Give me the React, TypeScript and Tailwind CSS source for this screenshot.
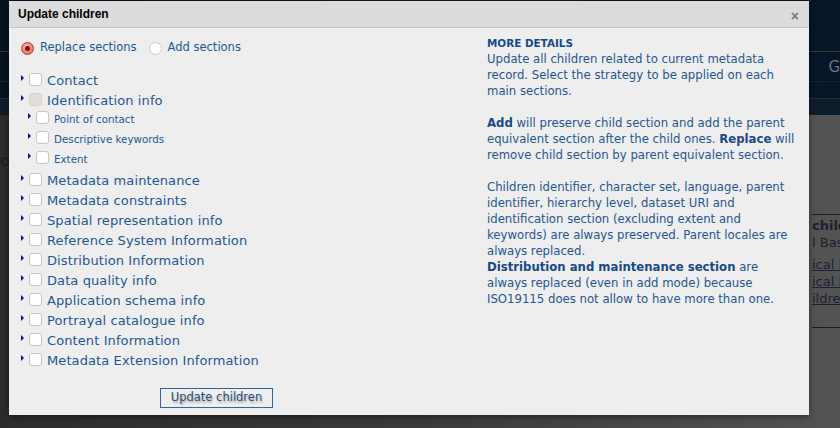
import React from 'react';

const topSections = [
  'Metadata maintenance',
  'Metadata constraints',
  'Spatial representation info',
  'Reference System Information',
  'Distribution Information',
  'Data quality info',
  'Application schema info',
  'Portrayal catalogue info',
  'Content Information',
  'Metadata Extension Information',
];

const identSubs = ['Point of contact', 'Descriptive keywords', 'Extent'];

function Arrow() {
  return (
    <span className="mt-[4px] mr-[5px] h-0 w-0 shrink-0 border-y-[3px] border-l-[3px] border-y-transparent border-l-[#0b0b9c]" />
  );
}

function Box({ disabled }: { disabled?: boolean }) {
  return (
    <span
      className={
        'mt-[2px] h-[13px] w-[13px] shrink-0 rounded-[3px] border ' +
        (disabled ? 'border-[#d6d0c8] bg-[#e2ddd6]' : 'border-[#cdc6bd] bg-white')
      }
    />
  );
}

function Radio({ checked }: { checked?: boolean }) {
  if (checked) {
    return (
      <span className="flex h-[13px] w-[13px] shrink-0 items-center justify-center rounded-full border border-[#c0392f] bg-[radial-gradient(circle_at_40%_35%,#fbb9b0,#e4574b)]">
        <span className="h-[5px] w-[5px] rounded-full bg-[#7c120b]" />
      </span>
    );
  }
  return <span className="block h-[13px] w-[13px] shrink-0 rounded-full border border-[#d5cdc4] bg-white" />;
}

function Row({ label, disabled }: { label: string; disabled?: boolean }) {
  return (
    <div className="flex h-5 items-start">
      <Arrow />
      <Box disabled={disabled} />
      <span className="ml-[5px] text-[13px] leading-5 tracking-[0.1px] text-[#1d5895]">{label}</span>
    </div>
  );
}

export default function App() {
  return (
    <div className="relative h-[428px] w-[840px] overflow-hidden font-['DejaVu_Sans',sans-serif]">
      {/* page behind the overlay */}
      <div className="flex h-full flex-col">
        <div className="flex h-[115px] flex-col bg-gradient-to-r from-[#07121d] via-[#0a1a2b] to-[#061527]">
          <div className="h-[52px] border-b border-[#3b3a30]" />
          <div className="flex h-[30px] justify-end border-b border-[#17222e] pr-0 text-[15px] leading-[30px] text-[#6b737c]">
            G
          </div>
          <div className="h-[17px] border-b border-[#22303d]" />
          <div className="flex-1 bg-[#0f1d2b]" />
        </div>
        <div className="flex flex-1 flex-col bg-gradient-to-r from-[#2c2c2c] via-[#3a3a3a] to-[#545454]">
          <div className="pt-[38px] text-[12px] font-bold text-[#1a1f26]">OR</div>
          <div className="mt-[43px] ml-[812px] whitespace-nowrap border-t border-[#1c1c1c] pt-[2px] text-[13px] leading-[17px] text-[#1a2230]">
            <div className="font-bold">children</div>
            <div>l Basic</div>
            <div className="mt-[5px] underline">ical B</div>
            <div className="underline">ical B</div>
            <div className="underline">ildren</div>
            <div className="mt-[20px] border-t border-[#1c1c1c]" />
          </div>
        </div>
      </div>

      {/* modal */}
      <div className="absolute left-[9px] top-[1px] flex h-[414px] w-[800px] flex-col bg-[#eeeeee] shadow-[0_2px_6px_rgba(0,0,0,0.45)]">
        <div className="flex h-[27px] items-center justify-between border-b border-[#c6c6c6] bg-[#dcdcdc] pl-[9px] pr-[10px]">
          <span className="font-['Liberation_Sans',Arial,sans-serif] text-[12px] font-bold text-black">Update children</span>
          <span className="mt-[4px] font-['Liberation_Sans',Arial,sans-serif] text-[14px] font-bold leading-none text-[#7a7a7a]">×</span>
        </div>

        <div className="flex flex-1 pl-[12px] pt-[10px]">
          {/* left column */}
          <div className="flex w-[466px] flex-col">
            <div className="flex h-5 items-center text-[11.5px] text-[#1d5895]">
              <Radio checked />
              <span className="ml-[6px]">Replace sections</span>
              <span className="ml-[12px]">
                <Radio />
              </span>
              <span className="ml-[6px]">Add sections</span>
            </div>

            <div className="mt-[13px] flex flex-col">
              <Row label="Contact" />
              <div className="flex h-[18px] items-start">
                <Arrow />
                <Box disabled />
                <span className="ml-[5px] text-[13px] leading-5 tracking-[0.1px] text-[#1d5895]">Identification info</span>
              </div>
              {identSubs.map((s) => (
                <div key={s} className="flex h-5 items-start pl-[7px]">
                  <Arrow />
                  <Box />
                  <span className="ml-[5px] text-[10.3px] leading-5 text-[#1d5895]">{s}</span>
                </div>
              ))}
              <div className="mt-[2px] flex flex-col">
                {topSections.map((s) => (
                  <Row key={s} label={s} />
                ))}
              </div>
            </div>

            <div className="mt-[13px] pl-[139px]">
              <button className="h-[20px] w-[113px] border border-[#2b68a0] bg-[#eeeeee] text-[11.5px] leading-none text-[#2c4f74] [text-shadow:1px_2px_2px_rgba(0,0,0,0.3)]">
                Update children
              </button>
            </div>
          </div>

          {/* right column */}
          <div className="-mt-[3px] flex flex-col whitespace-nowrap text-[11.7px] leading-4 text-[#1f5792]">
            <div className="text-[10.4px] font-bold text-[#164a85]">MORE DETAILS</div>
            <p>
              Update all children related to current metadata
              <br />
              record. Select the strategy to be applied on each
              <br />
              main sections.
            </p>
            <p className="mt-4">
              <b className="text-[#164a85]">Add</b> will preserve child section and add the parent
              <br />
              equivalent section after the child ones. <b className="text-[#164a85]">Replace</b> will
              <br />
              remove child section by parent equivalent section.
            </p>
            <p className="mt-4">
              Children identifier, character set, language, parent
              <br />
              identifier, hierarchy level, dataset URI and
              <br />
              identification section (excluding extent and
              <br />
              keywords) are always preserved. Parent locales are
              <br />
              always replaced.
              <br />
              <b className="text-[#164a85]">Distribution and maintenance section</b> are
              <br />
              always replaced (even in add mode) because
              <br />
              ISO19115 does not allow to have more than one.
            </p>
          </div>
        </div>
      </div>
    </div>
  );
}
